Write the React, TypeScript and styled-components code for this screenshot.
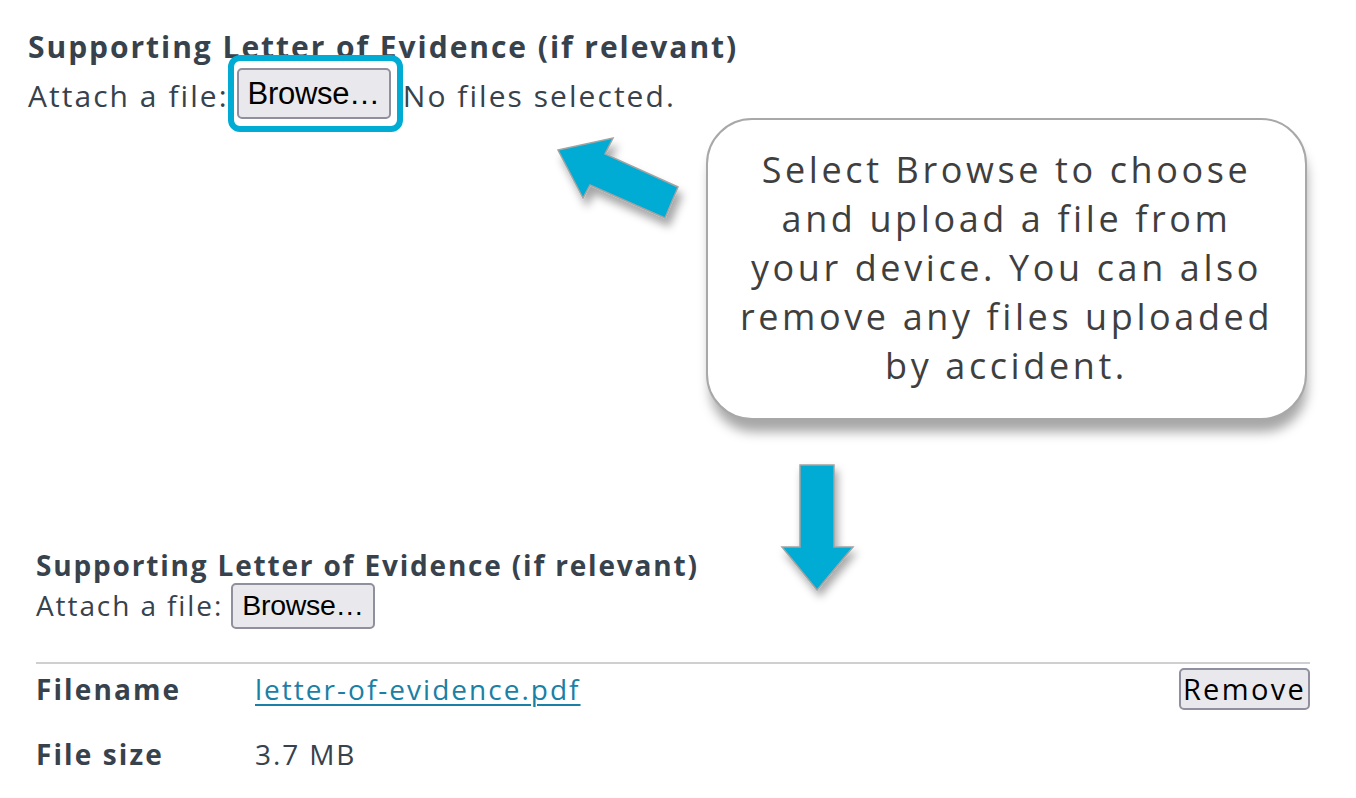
import React from "react";
import styled, {createGlobalStyle} from "styled-components";

const GlobalStyle = createGlobalStyle`
    body{
        margin: 0;
        background: #ffffff;
        font-family: "Open Sans", "Liberation Sans", sans-serif;
        color: #37424c;
    }
`

const Page = styled.div`
    position: relative;
    width: 1356px;
    height: 798px;
    overflow: hidden;
    background: #fff;
`

const Section = styled.section<{$left: number, $top: number, $size: number}>`
    padding-left: ${p => p.$left}px;
    padding-right: 46px;
    padding-top: ${p => p.$top}px;
    font-size: ${p => p.$size}px;
    letter-spacing: 0.068em;
`

const Heading = styled.h3`
    margin: 0;
    font-size: 1em;
    font-weight: 700;
    line-height: 1.2;
    letter-spacing: 0.065em;
`

const AttachRow = styled.div<{$gap?: number}>`
    display: flex;
    align-items: center;
    line-height: 1.2;
    margin-top: ${p => p.$gap ?? 0}px;
`

const Highlight = styled.span`
    display: inline-flex;
    padding: 7px 6px 7px 3px;
    border: 6px solid #00acd4;
    border-radius: 12px;
    margin: -22px 0 -17px -1px;
`

const NativeButton = styled.button<{$size: number, $height: number}>`
    font-family: "Liberation Sans", Arial, sans-serif;
    font-size: ${p => p.$size}px;
    letter-spacing: -0.01em;
    color: #000;
    background: #e9e9ed;
    border: 2px solid #8f8f9d;
    border-radius: 5px;
    height: ${p => p.$height}px;
    padding: 0 9px;
    line-height: 1;
`

const Divider = styled.hr`
    border: none;
    border-top: 2px solid #cfcfcf;
    margin: 33px 0 4px;
`

const FileTable = styled.div`
    display: grid;
    grid-template-columns: 219px 1fr auto;
    row-gap: 25px;
    align-items: center;
`

const Label = styled.div`
    font-weight: 700;
    letter-spacing: 0.075em;
`

const Value = styled.div`
    letter-spacing: 0.068em;
`

const FileLink = styled.a`
    color: #1a80a5;
    text-decoration: underline;
    text-underline-offset: 4px;
    text-decoration-thickness: 2px;
    letter-spacing: 0.072em;
`

const RemoveButton = styled.button`
    font-family: "Open Sans", sans-serif;
    font-size: 29px;
    letter-spacing: 0.08em;
    color: #000;
    background: #e9e9ed;
    border: 2px solid #8f8f9d;
    border-radius: 5px;
    width: 131px;
    height: 42px;
    padding: 0;
    line-height: 1;
`

const Callout = styled.div`
    position: absolute;
    left: 706px;
    top: 118px;
    width: 601px;
    height: 302px;
    box-sizing: border-box;
    border: 2px solid #a8a8a8;
    border-radius: 46px;
    background: #fff;
    box-shadow: 2px 14px 12px -2px rgba(0, 0, 0, 0.35);
    display: flex;
    flex-direction: column;
    align-items: center;
    justify-content: center;
    text-align: center;
    font-size: 36px;
    line-height: 49px;
    letter-spacing: 0.1em;
    color: #3f3f3f;
    padding-bottom: 4px;
`

const CalloutLine = styled.span`
    display: block;
    white-space: nowrap;
`

const ArrowSvg = styled.svg<{$left: number, $top: number}>`
    position: absolute;
    left: ${p => p.$left}px;
    top: ${p => p.$top}px;
    overflow: visible;
`

const calloutLines = [
    "Select Browse to choose",
    "and upload a file from",
    "your device. You can also",
    "remove any files uploaded",
    "by accident.",
]

export default function App(){
    return(
        <Page>
            <GlobalStyle/>
            <Section $left={28} $top={29} $size={30}>
                <Heading>Supporting Letter of Evidence (if relevant)</Heading>
                <AttachRow $gap={12}>
                    Attach a file:
                    <Highlight>
                        <NativeButton $size={31} $height={51}>Browse…</NativeButton>
                    </Highlight>
                    <span>No files selected.</span>
                </AttachRow>
            </Section>

            <Section $left={36} $top={434} $size={28}>
                <Heading>Supporting Letter of Evidence (if relevant)</Heading>
                <AttachRow>
                    Attach a file:
                    <NativeButton $size={28.5} $height={46} style={{marginLeft: 8}}>Browse…</NativeButton>
                </AttachRow>
                <Divider/>
                <FileTable>
                    <Label>Filename</Label>
                    <Value><FileLink href="#">letter-of-evidence.pdf</FileLink></Value>
                    <RemoveButton>Remove</RemoveButton>
                    <Label>File size</Label>
                    <Value>3.7 MB</Value>
                    <span/>
                </FileTable>
            </Section>

            <ArrowSvg $left={540} $top={125} width={160} height={120}>
                <defs>
                    <filter id="upShadow" x="-30%" y="-30%" width="170%" height="170%">
                        <feDropShadow dx="4" dy="8" stdDeviation="4" floodColor="#000" floodOpacity="0.35"/>
                    </filter>
                </defs>
                <polygon
                    points="18,25 73,13 65,29 138,62 125,93 50,60 43,73"
                    fill="#00acd4"
                    stroke="#a3a3a3"
                    strokeWidth={1.5}
                    filter="url(#upShadow)"
                />
            </ArrowSvg>

            <Callout>
                {calloutLines.map(line => <CalloutLine key={line}>{line}</CalloutLine>)}
            </Callout>

            <ArrowSvg $left={780} $top={463} width={76} height={130}>
                <defs>
                    <filter id="downShadow" x="-30%" y="-30%" width="170%" height="170%">
                        <feDropShadow dx="3" dy="6" stdDeviation="4" floodColor="#000" floodOpacity="0.35"/>
                    </filter>
                </defs>
                <polygon
                    points="20,2 54,2 54,84 73,84 37,127 2,84 20,84"
                    fill="#00acd4"
                    stroke="#a3a3a3"
                    strokeWidth={1.5}
                    filter="url(#downShadow)"
                />
            </ArrowSvg>
        </Page>
    )
}
